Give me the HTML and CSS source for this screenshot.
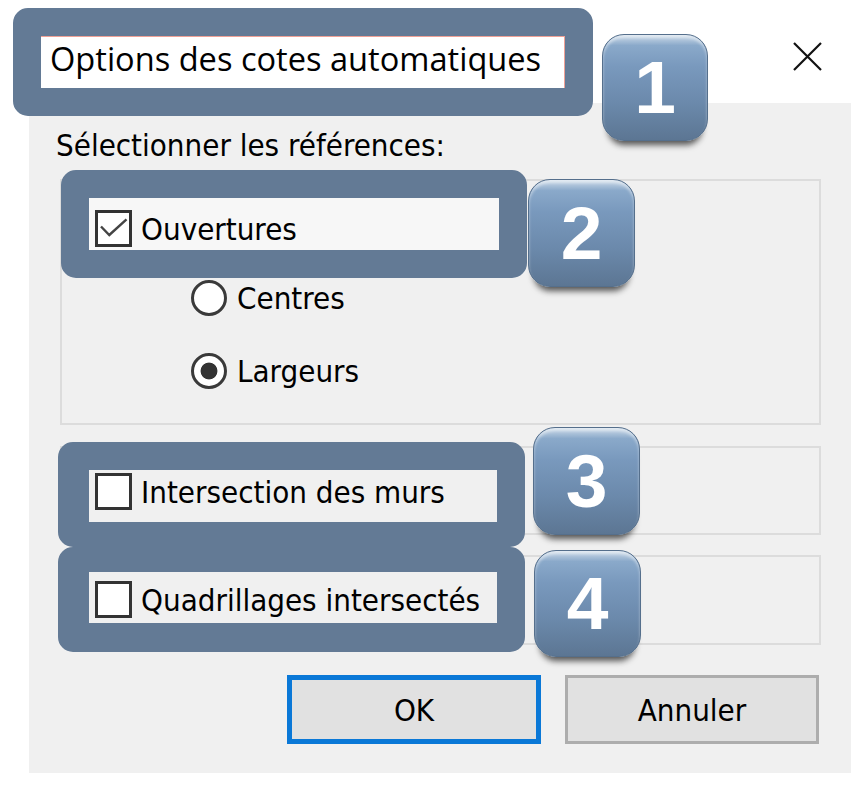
FILE: index.html
```html
<!DOCTYPE html>
<html lang="fr">
<head>
<meta charset="utf-8">
<title>Options des cotes automatiques</title>
<link rel="stylesheet" href="styles.css">
</head>
<body>
<header class="titlebar">
  <div class="callout callout-title">
    <h1 class="title-text">Options des cotes automatiques</h1>
  </div>
  <button class="close" type="button" aria-label="Fermer">
    <svg width="29" height="29" viewBox="0 0 29 29"><path d="M1 1 L28 28 M28 1 L1 28" stroke="#111" stroke-width="2.2" fill="none"/></svg>
  </button>
</header>

<main class="panel">
  <p class="label">Sélectionner les références:</p>

  <div class="group group-1">
    <div class="callout callout-2">
      <div class="check-row">
        <span class="checkbox">
          <svg width="31" height="31" viewBox="0 0 31 31"><path d="M3 13.5 L11.3 22 L28.5 6.3" stroke="#444" stroke-width="2.4" fill="none"/></svg>
        </span>
        <span class="text">Ouvertures</span>
      </div>
    </div>
    <div class="radio-row radio-first"><span class="radio"></span><span class="text">Centres</span></div>
    <div class="radio-row radio-second"><span class="radio on"></span><span class="text">Largeurs</span></div>
  </div>

  <div class="group group-2">
    <div class="callout callout-3">
      <div class="check-row">
        <span class="checkbox"></span>
        <span class="text">Intersection des murs</span>
      </div>
    </div>
  </div>

  <div class="group group-3">
    <div class="callout callout-4">
      <div class="check-row">
        <span class="checkbox"></span>
        <span class="text">Quadrillages intersectés</span>
      </div>
    </div>
  </div>

  <div class="buttons">
    <button class="btn btn-default" type="button">OK</button>
    <button class="btn" type="button">Annuler</button>
  </div>
</main>

<div class="badge badge-1">1</div>
<div class="badge badge-2">2</div>
<div class="badge badge-3">3</div>
<div class="badge badge-4">4</div>
</body>
</html>
```
FILE: styles.css
```css
* { box-sizing: border-box; }

html, body { margin: 0; padding: 0; }

body {
  width: 858px;
  height: 790px;
  overflow: hidden;
  position: relative;
  background: #ffffff;
  color: #000;
  font-family: "DejaVu Sans Condensed", "Liberation Sans", Arial, sans-serif;
  font-size: 31px;
  line-height: 36px;
}

/* ---------- title bar ---------- */
.titlebar {
  height: 103px;
  display: flex;
  align-items: flex-start;
}

.callout {
  position: relative;
  z-index: 1;
  border: 28px solid #637a95;
  border-radius: 15px;
}

.callout-title {
  margin: 8px 0 0 13px;
  width: 580px;
  height: 108px;
  background: #ffffff;
  box-shadow: inset -1px 1px 0 #f0a196;
  padding-left: 9px;
}

.title-text {
  margin: 0;
  font-family: "Open Sans", "Noto Sans", sans-serif;
  font-weight: 400;
  font-size: 32.6px;
  line-height: 45px;
  white-space: nowrap;
}

.close {
  margin: 42px 36px 0 auto;
  width: 29px;
  height: 29px;
  padding: 0;
  border: 0;
  background: none;
  display: block;
}
.close svg { display: block; }

/* ---------- dialog body ---------- */
.panel {
  margin-left: 29px;
  width: 822px;
  height: 670px;
  background: #f0f0f0;
  padding: 24px 30px 0 31px;
  display: flex;
  flex-direction: column;
}

.label {
  margin: 0 0 0 -4px;
  white-space: nowrap;
}

.group {
  border: 2px solid #dcdcdc;
  flex: none;
}
.group-1 { margin-top: 16px; height: 246px; }
.group-2 { margin-top: 21px; height: 89px; }
.group-3 { margin-top: 20px; height: 90px; }

.callout-2 {
  margin: -11px 0 0 -1px;
  width: 466px;
  height: 108px;
  background: #f7f7f7;
  padding: 12px 0 0 6px;
}
.callout-3 {
  border-width: 28px 28px 25px 31px;
  margin: -6px 0 0 -4px;
  width: 467px;
  height: 105px;
  background: #f0f0f0;
  padding: 3px 0 0 6px;
}
.callout-4 {
  border-width: 25px 28px 29px 31px;
  margin: -10px 0 0 -4px;
  width: 467px;
  height: 105px;
  background: #f0f0f0;
  padding: 9px 0 0 6px;
}

.check-row {
  display: flex;
  align-items: center;
  gap: 9px;
  height: 37px;
  white-space: nowrap;
}

.checkbox {
  flex: none;
  width: 37px;
  height: 37px;
  border: 3px solid #333;
  background: #fff;
}
.checkbox svg { display: block; }

.radio-row {
  display: flex;
  align-items: center;
  gap: 10px;
  height: 37px;
  margin-left: 129px;
  white-space: nowrap;
}
.radio-first { margin-top: 1px; }
.radio-second { margin-top: 36px; }

.radio {
  flex: none;
  width: 36px;
  height: 36px;
  border-radius: 50%;
  border: 3px solid #3a3a3a;
  background: #fff;
}
.radio.on {
  background: radial-gradient(circle, #333 0 8px, #fff 8.8px);
}

/* ---------- buttons ---------- */
.buttons {
  display: flex;
  justify-content: flex-end;
  gap: 24px;
  margin: 30px 2px 0 0;
}

.btn {
  width: 254px;
  height: 69px;
  padding: 0;
  background: #e1e1e1;
  border: 3px solid #adadad;
  color: #000;
  font: inherit;
}
.btn-default {
  border: 5px solid #0a78d7;
}

/* ---------- numbered badges ---------- */
.badge {
  position: absolute;
  z-index: 3;
  width: 106px;
  height: 107px;
  border-radius: 22px;
  border: 1px solid #556f8c;
  background: linear-gradient(to bottom, #cddbe9 0%, #8aa9ca 10%, #7999bd 30%, #6b89ab 65%, #5c7693 100%);
  box-shadow: inset 0 3px 3px rgba(255,255,255,0.45), 0 10px 6px -6px rgba(0,0,0,0.65);
  color: #fff;
  font-family: "Liberation Sans", Arial, sans-serif;
  font-weight: 700;
  font-size: 75px;
  line-height: 1;
  display: flex;
  align-items: center;
  justify-content: center;
}
.badge-1 { left: 602px; top: 34px; }
.badge-2 { left: 528px; top: 179px; width: 107px; height: 108px; }
.badge-3 { left: 533px; top: 427px; width: 107px; height: 108px; }
.badge-4 { left: 534px; top: 550px; width: 107px; height: 107px; }
```
